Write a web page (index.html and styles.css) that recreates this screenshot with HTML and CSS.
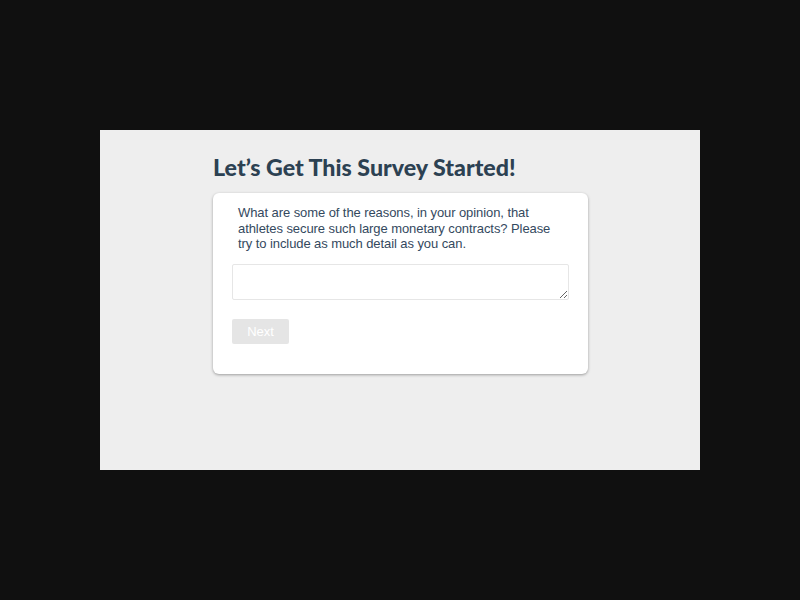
FILE: index.html
```html
<!DOCTYPE html>
<html>
<head>
<meta charset="utf-8">
<link rel="stylesheet" href="styles.css">
</head>
<body>
<div class="stage">
  <div class="survey">
    <h1 class="title">Let’s Get This Survey Started!</h1>
    <div class="card">
      <p class="question">What are some of the reasons, in your opinion, that athletes secure such large monetary contracts? Please try to include as much detail as you can.</p>
      <textarea class="answer"></textarea>
      <button class="next" disabled>Next</button>
    </div>
  </div>
</div>
</body>
</html>
```
FILE: styles.css
```css
html, body {
  margin: 0;
  padding: 0;
  background: #101010;
}
.stage {
  margin: 130px 0 0 100px;
  width: 600px;
  height: 340px;
  background: #eeeeee;
  box-sizing: border-box;
  padding: 22px 0 0 113px;
}
.survey {
  width: 375px;
}
.title {
  margin: 0 0 11px 0;
  font-family: Lato, "Liberation Sans", sans-serif;
  font-weight: 900;
  font-size: 23.2px;
  line-height: 30px;
  color: #2c4152;
  letter-spacing: 0;
}
.card {
  background: #ffffff;
  border-radius: 6px;
  box-shadow: 0 1px 3px rgba(0,0,0,0.35);
  padding: 12px 18px 30px 19px;
  height: 181px;
  box-sizing: border-box;
}
.question {
  margin: 0 0 12px 6px;
  font-family: "Liberation Sans", Arial, sans-serif;
  font-size: 13px;
  line-height: 15.7px;
  color: #34495e;
  width: 320px;
  letter-spacing: -0.08px;
}
.answer {
  display: block;
  width: 337px;
  height: 36px;
  box-sizing: border-box;
  border: 1px solid #e6e6e6;
  border-radius: 2px;
  margin: 0 0 19px 0;
  padding: 4px;
  font-family: "Liberation Sans", Arial, sans-serif;
  font-size: 13px;
  resize: vertical;
}
.next {
  display: block;
  width: 57px;
  height: 25px;
  border: none;
  border-radius: 2px;
  background: #e5e5e5;
  color: #ffffff;
  font-family: "Liberation Sans", Arial, sans-serif;
  font-size: 13px;
  padding: 0;
}
```
